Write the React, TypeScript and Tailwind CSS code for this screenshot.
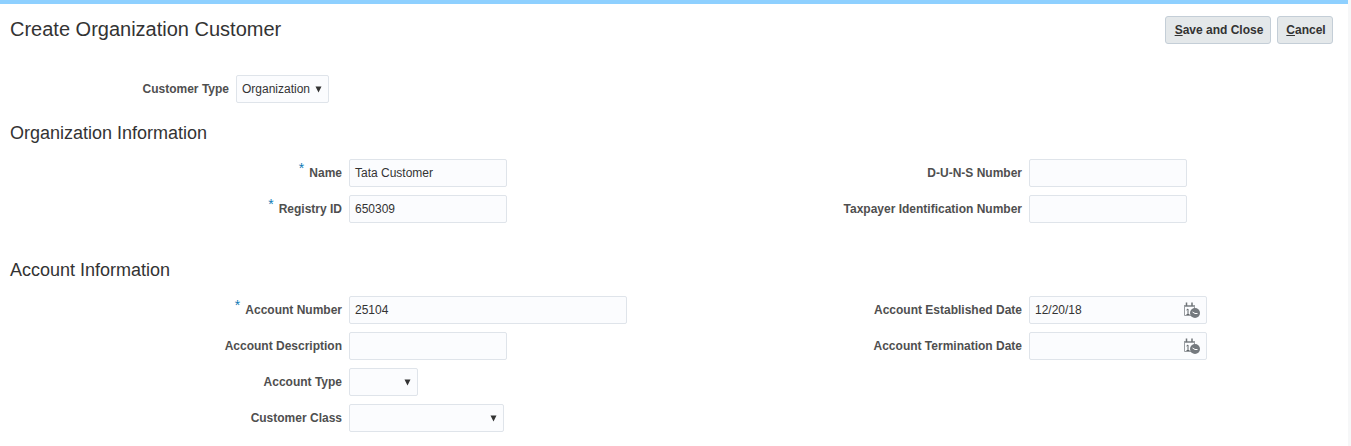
import React from 'react';

function CalendarIcon() {
    return (
        <svg width="18" height="17" viewBox="0 0 18 17" className="shrink-0">
            <path d="M1.5 3.5h10v10h-10z" fill="#fbfcfe" stroke="#9a9ea2" strokeWidth="1" />
            <path d="M1 3h11v2H1z" fill="#9a9ea2" />
            <path d="M3.5 0.5v3.5M9 0.5v3.5" stroke="#6f7478" strokeWidth="1.5" />
            <path d="M3.5 8l1.5-1v5M3.5 12.5h3" stroke="#5f6468" strokeWidth="1" fill="none" />
            <circle cx="12" cy="11" r="5" fill="#74797e" />
            <path d="M9.5 10l2.5 1.5h2.5" stroke="#fff" strokeWidth="1" fill="none" />
        </svg>
    );
}

function Arrow() {
    return (
        <svg width="7" height="7" viewBox="0 0 7 7" className="shrink-0">
            <path d="M0.5 0.5h6L3.5 6.5z" fill="#333" />
        </svg>
    );
}

function Label({ text, required }: { text: string; required?: boolean }) {
    return (
        <label className="text-xs font-bold text-[#4f4f4f] text-right whitespace-nowrap">
            {required && <span className="text-[#0f7ab5] text-sm font-normal leading-[0] align-[4px] mr-[5px]">*</span>}
            {text}
        </label>
    );
}

function Input({ value, width, icon }: { value?: string; width: string; icon?: boolean }) {
    return (
        <div className={`${width} h-7 shrink-0 flex items-center justify-between pl-[5px] pr-[5px] bg-[#fbfcfe] border border-[#dfe4ea] rounded-[2px] text-xs text-[#333]`}>
            <span>{value}</span>
            {icon && <CalendarIcon />}
        </div>
    );
}

function Select({ value, width }: { value?: string; width: string }) {
    return (
        <div className={`${width} h-7 shrink-0 flex items-center justify-between pl-[5px] pr-[6px] bg-[#fbfcfe] border border-[#dfe4ea] rounded-[2px] text-xs text-[#333]`}>
            <span>{value}</span>
            <Arrow />
        </div>
    );
}

function Field({ label, required, labelWidth, children }: { label: string; required?: boolean; labelWidth: string; children: React.ReactNode }) {
    return (
        <div className="flex items-center gap-[7px] h-7">
            <div className={`${labelWidth} shrink-0 pb-[2px] text-right`}>
                <Label text={label} required={required} />
            </div>
            {children}
        </div>
    );
}

export default function App() {
    return (
        <div className="w-[1351px] h-[446px] overflow-hidden bg-[#f6f7f8] font-['Liberation_Sans',Arial,sans-serif] flex">
            <div className="w-[1348px] h-full bg-white">
                <div className="h-1 bg-[#8ed0ff]" />

                <div className="flex justify-between items-start pl-[10px] pr-[15px] pt-[12px]">
                    <h1 className="text-xl text-[#333] leading-[26px]">Create Organization Customer</h1>
                    <div className="flex gap-[6px]">
                        <button className="h-7 w-[106px] pl-[2px] bg-[#e4e8ea] border border-[#c4ced7] rounded-[3px] text-xs font-bold text-[#333]">
                            <u>S</u>ave and Close
                        </button>
                        <button className="h-7 w-[56px] pl-[2px] bg-[#e4e8ea] border border-[#c4ced7] rounded-[3px] text-xs font-bold text-[#333]">
                            <u>C</u>ancel
                        </button>
                    </div>
                </div>

                <div className="mt-[31px] pl-[7px]">
                    <Field label="Customer Type" labelWidth="w-[222px]">
                        <Select value="Organization" width="w-[93px]" />
                    </Field>
                </div>

                <h2 className="mt-[18px] pl-[10px] text-lg text-[#333] leading-[24px]">Organization Information</h2>

                <div className="mt-[14px] grid grid-cols-[634px_auto] justify-start gap-y-2">
                    <Field label="Name" required labelWidth="w-[342px]"><Input value="Tata Customer" width="w-[158px]" /></Field>
                    <Field label="D-U-N-S Number" labelWidth="w-[388px]"><Input width="w-[158px]" /></Field>
                    <Field label="Registry ID" required labelWidth="w-[342px]"><Input value="650309" width="w-[158px]" /></Field>
                    <Field label="Taxpayer Identification Number" labelWidth="w-[388px]"><Input width="w-[158px]" /></Field>
                </div>

                <h2 className="mt-[35px] pl-[10px] text-lg text-[#333] leading-[24px]">Account Information</h2>

                <div className="mt-[14px] grid grid-cols-[634px_auto] justify-start gap-y-2">
                    <Field label="Account Number" required labelWidth="w-[342px]"><Input value="25104" width="w-[278px]" /></Field>
                    <Field label="Account Established Date" labelWidth="w-[388px]"><Input value="12/20/18" width="w-[178px]" icon /></Field>
                    <Field label="Account Description" labelWidth="w-[342px]"><Input width="w-[158px]" /></Field>
                    <Field label="Account Termination Date" labelWidth="w-[388px]"><Input width="w-[178px]" icon /></Field>
                    <div className="col-span-2">
                        <Field label="Account Type" labelWidth="w-[342px]"><Select width="w-[69px]" /></Field>
                    </div>
                    <div className="col-span-2">
                        <Field label="Customer Class" labelWidth="w-[342px]"><Select width="w-[155px]" /></Field>
                    </div>
                </div>
            </div>
        </div>
    );
}
